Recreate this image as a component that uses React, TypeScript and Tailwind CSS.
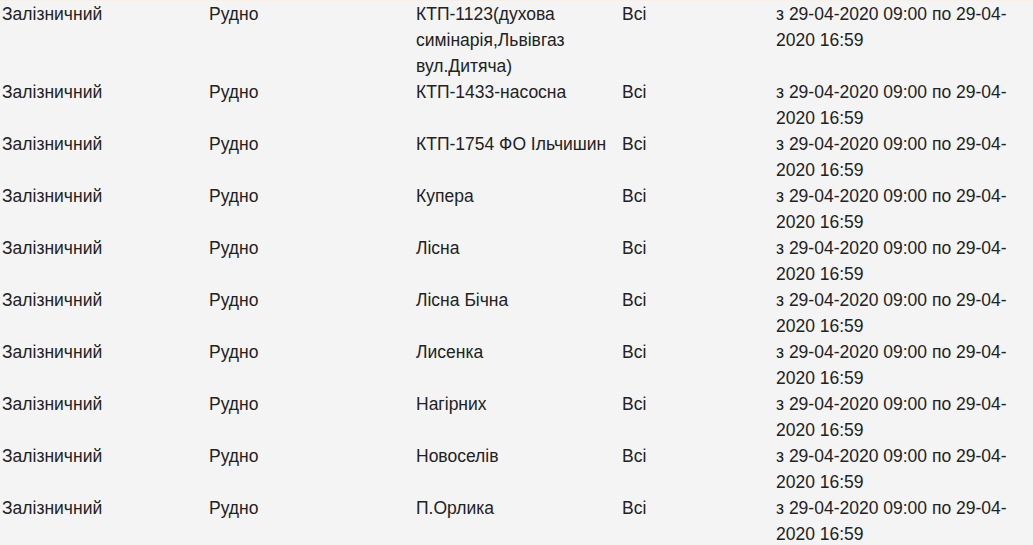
import React from "react";

const rows: { street: string[] }[] = [
  { street: ["КТП-1123(духова симінарія,Львівгаз вул.Дитяча)"] },
  { street: ["КТП-1433-насосна"] },
  { street: ["КТП-1754 ФО Ільчишин"] },
  { street: ["Купера"] },
  { street: ["Лісна"] },
  { street: ["Лісна Бічна"] },
  { street: ["Лисенка"] },
  { street: ["Нагірних"] },
  { street: ["Новоселів"] },
  { street: ["П.Орлика"] },
];

export default function App() {
  return (
    <div
      className="w-[1033px] h-[545px] overflow-hidden bg-[#f4f4f4] text-[#222] text-[17.5px] leading-[26px] border-t border-[#fcefe2]"
      style={{ fontFamily: '"Liberation Sans", Arial, sans-serif' }}
    >
      <div>
        {rows.map((r, i) => (
          <div key={i} className="grid grid-cols-[207px_207px_206px_154px_1fr] pl-[2px]">
            <div>Залізничний</div>
            <div>Рудно</div>
            <div className="pr-2">{r.street.join(" ")}</div>
            <div>Всі</div>
            <div>з 29-04-2020 09:00 по 29-04-2020 16:59</div>
          </div>
        ))}
      </div>
    </div>
  );
}
